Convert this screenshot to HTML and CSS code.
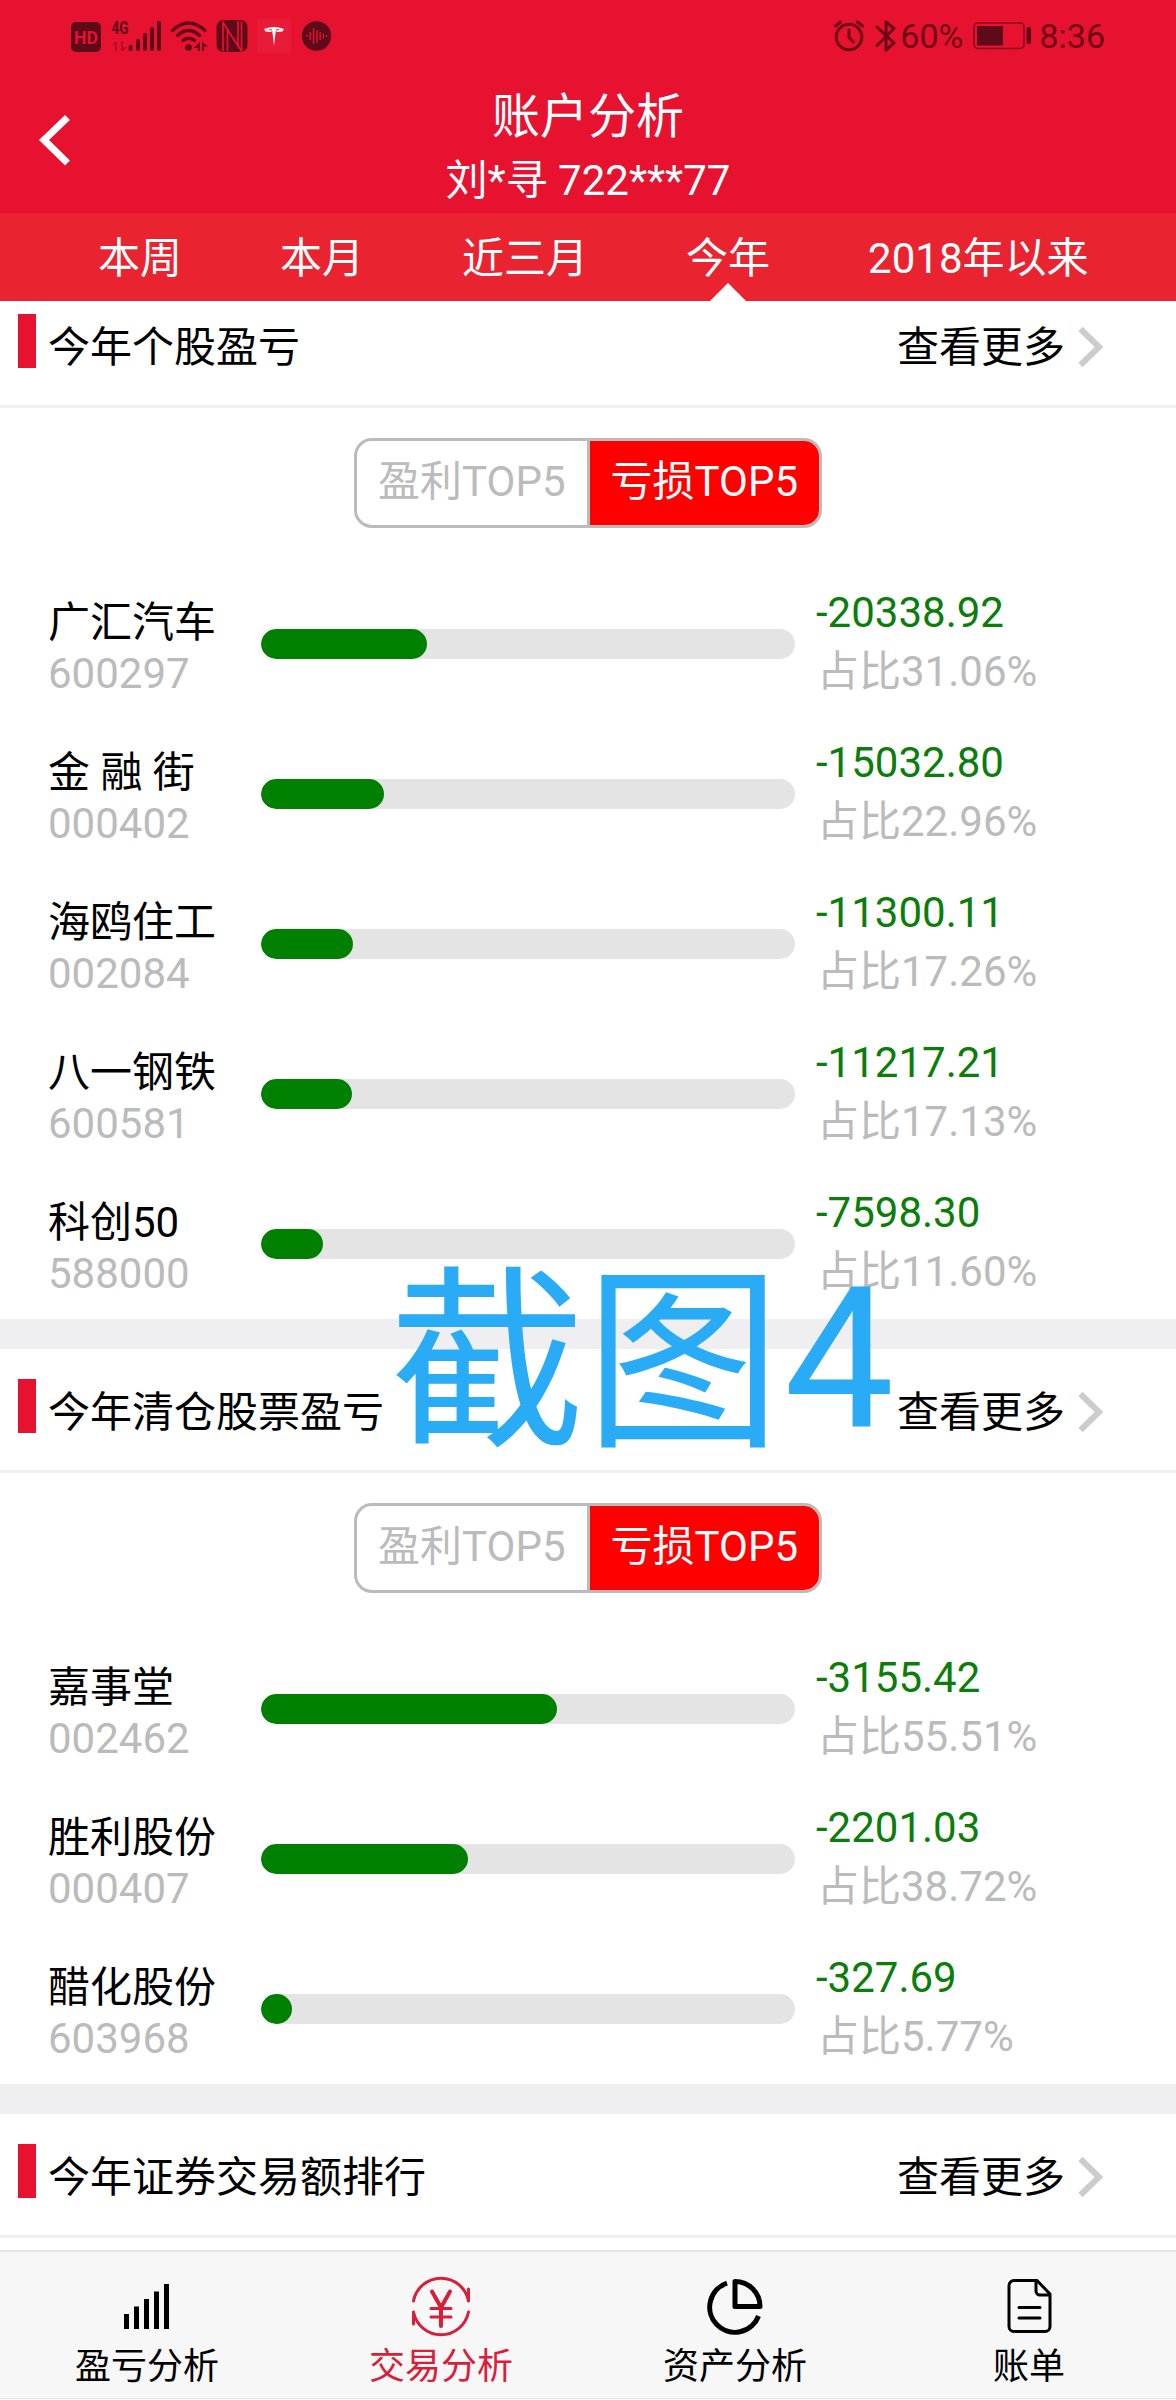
FILE: index.html
```html
<!DOCTYPE html>
<html lang="zh-CN">
<head>
<meta charset="utf-8">
<title>账户分析</title>
<link rel="stylesheet" href="styles.css">
</head>
<body>
<div class="app">
  <header class="header">
    <div class="status">
      <svg class="status-icons" width="270" height="40" viewBox="66 14 270 40">
        <g fill="#5e0a18">
          <rect x="71" y="22" width="30" height="30" rx="5"/>
          <text x="74" y="43.500" class="hd" textLength="24" lengthAdjust="spacingAndGlyphs">HD</text>
          <text x="111.500" y="34" class="net" textLength="17" lengthAdjust="spacingAndGlyphs">4G</text>
          <path opacity=".35" d="M117 41v10h-2v-6h-3zM121 41h2v6h4l-4 4h-2z"/>
          <rect x="128.500" y="45" width="4" height="6" rx="2"/><rect x="136" y="39" width="4" height="12" rx="2"/><rect x="143" y="33" width="4" height="18" rx="2"/><rect x="150" y="27" width="4" height="24" rx="2"/><rect x="157" y="21" width="4" height="30" rx="2"/>
          <circle cx="188.500" cy="47.500" r="3.300"/>
          <path d="M200 42v9h-2v-3h-4zM202 42l6 4.500h-4V51h-2z"/>
          <rect x="216.500" y="20" width="31" height="32" rx="7"/>
          <circle cx="316.500" cy="36" r="14.700"/>
        </g>
        <g fill="none" stroke="#5e0a18" stroke-width="3.200" stroke-linecap="round"><path d="M172.500 30.500q16-15 32.500 0M177.500 35.500q11-10 22 0M183 40.500q5.500-4.500 11.500 0"/></g>
        <path d="M223 51V22.500L238 46V21M241.500 21.500V51L227.500 30V51.500" fill="none" stroke="#e61230" stroke-width="1.700"/>
        <rect x="257" y="19" width="34" height="34" fill="#e81b38"/>
        <path fill="#fff" d="M264 29q10-4 20 0l-1.500 2.500-5.500.5-1.200-1.200L274 45.500l-1.800-14.700L271 32l-5.500-.5z"/>
        <path d="M269 29.800h3M276 29.800h3" stroke="#e81b38" stroke-width="1"/>
        <path d="M307 34.500v2M310.200 32v8M313.500 28v16M317 30v13M320.200 32v8M323.400 33.500v5M326.500 35v2" stroke="#e61230" stroke-width="1.400"/>
      </svg>
      <div class="status-right">
        <svg width="64" height="36" viewBox="832 18 64 36" fill="none" stroke="#6e0714" stroke-width="3" stroke-linecap="round" stroke-linejoin="round">
          <circle cx="849" cy="37" r="12.800"/><path d="M849 30v7.500l4.500 4.500M835.500 26l5-4M862.500 26l-5-4"/>
          <path d="M877 27l17 16-8 7V22l8 6.500L877 45.500"/>
        </svg>
        <span class="battery-text">60%</span>
        <svg class="battery" width="60" height="30" viewBox="972 22 60 30">
          <rect x="974" y="24" width="50" height="25.500" rx="4" fill="none" stroke="#8c0b1c" stroke-width="1.600"/><rect x="977" y="27" width="26" height="19.500" fill="#5e0a18"/><rect x="1026.500" y="28" width="4.500" height="17" rx="2" fill="#5e0a18"/>
        </svg>
        <span class="time">8:36</span>
      </div>
    </div>
    <div class="titlebar">
      <svg class="back" width="40" height="60" viewBox="36 110 40 60" fill="none" stroke="#fff" stroke-width="7"><path d="M67.500 117.500L44 140l23.500 23"/></svg>
      <h1 class="title">账户分析</h1>
      <div class="account">刘*寻 722***77</div>
    </div>
    <nav class="periods">
      <span>本周</span><span>本月</span><span>近三月</span><span class="current">今年</span><span>2018年以来</span>
    </nav>
  </header>

  <main class="content">
    <section class="panel">
      <div class="panel-head"><i class="mark"></i><h2>今年个股盈亏</h2><a class="more">查看更多<svg width="28" height="44" viewBox="0 0 28 44"><path d="M3.500 4L22 22 3.500 40"/></svg></a></div>
      <div class="toggle"><span>盈利TOP5</span><span class="on">亏损TOP5</span></div>
      <div class="row"><div class="stock"><b>广汇汽车</b><small>600297</small></div><div class="bar"><i style="width:31.06%"></i></div><div class="loss"><b>-20338.92</b><small>占比31.06%</small></div></div>
      <div class="row"><div class="stock"><b>金 融 街</b><small>000402</small></div><div class="bar"><i style="width:22.96%"></i></div><div class="loss"><b>-15032.80</b><small>占比22.96%</small></div></div>
      <div class="row"><div class="stock"><b>海鸥住工</b><small>002084</small></div><div class="bar"><i style="width:17.26%"></i></div><div class="loss"><b>-11300.11</b><small>占比17.26%</small></div></div>
      <div class="row"><div class="stock"><b>八一钢铁</b><small>600581</small></div><div class="bar"><i style="width:17.13%"></i></div><div class="loss"><b>-11217.21</b><small>占比17.13%</small></div></div>
      <div class="row"><div class="stock"><b>科创50</b><small>588000</small></div><div class="bar"><i style="width:11.60%"></i></div><div class="loss"><b>-7598.30</b><small>占比11.60%</small></div></div>
    </section>
    <section class="panel">
      <div class="panel-head"><i class="mark"></i><h2>今年清仓股票盈亏</h2><a class="more">查看更多<svg width="28" height="44" viewBox="0 0 28 44"><path d="M3.500 4L22 22 3.500 40"/></svg></a></div>
      <div class="toggle"><span>盈利TOP5</span><span class="on">亏损TOP5</span></div>
      <div class="row"><div class="stock"><b>嘉事堂</b><small>002462</small></div><div class="bar"><i style="width:55.51%"></i></div><div class="loss"><b>-3155.42</b><small>占比55.51%</small></div></div>
      <div class="row"><div class="stock"><b>胜利股份</b><small>000407</small></div><div class="bar"><i style="width:38.72%"></i></div><div class="loss"><b>-2201.03</b><small>占比38.72%</small></div></div>
      <div class="row"><div class="stock"><b>醋化股份</b><small>603968</small></div><div class="bar"><i style="width:5.77%"></i></div><div class="loss"><b>-327.69</b><small>占比5.77%</small></div></div>
    </section>
    <section class="panel last">
      <div class="panel-head"><i class="mark"></i><h2>今年证券交易额排行</h2><a class="more">查看更多<svg width="28" height="44" viewBox="0 0 28 44"><path d="M3.500 4L22 22 3.500 40"/></svg></a></div>
    </section>
  </main>

  <nav class="tabbar">
    <a class="tab"><svg width="64" height="64" viewBox="0 0 64 64" fill="currentColor"><path d="M9 40h5v15H9zM19 32.500h5V55h-5zM29 25h5v30h-5zM39 17.500h5V55h-5zM49 10h5v45h-5z"/></svg><span>盈亏分析</span></a>
    <a class="tab active"><svg width="64" height="64" viewBox="0 0 64 64" fill="none" stroke="currentColor" stroke-width="3" stroke-linecap="round" stroke-linejoin="round"><path d="M4.500 27A28 28 0 0 1 59.500 27V15M59.500 38A28 28 0 0 1 4.500 38V50"/><path stroke-width="4" d="M23 17.500l9 16 9-16M32 33v19"/><path d="M22 34.500h20M22 43h20"/></svg><span>交易分析</span></a>
    <a class="tab"><svg width="64" height="64" viewBox="0 0 64 64" fill="none" stroke="currentColor" stroke-width="5"><path stroke-linejoin="round" d="M32 7.500v25h25A25 25 0 0 0 32 7.500z"/><path d="M24 9.200A25.200 25.200 0 1 0 55.500 42"/></svg><span>资产分析</span></a>
    <a class="tab"><svg width="64" height="64" viewBox="0 0 64 64" fill="none" stroke="currentColor" stroke-width="3" stroke-linecap="round" stroke-linejoin="round"><path d="M40 6.500H17a5 5 0 0 0-5 5v41a5 5 0 0 0 5 5h31a5 5 0 0 0 5-5V20z"/><path d="M39 7v10a4 4 0 0 0 4 4h9M22 33.500h21M22 44h21"/></svg><span>账单</span></a>
  </nav>
  <div class="caption"><span class="caption-word">截图</span>4</div>
</div>
</body>
</html>
```

FILE: styles.css
```css
* { box-sizing: border-box; }
body { margin: 0; }
.app {
  position: relative;
  display: flex;
  flex-direction: column;
  width: 1176px;
  height: 2400px;
  overflow: hidden;
  background: #fff;
  color: #000;
  font: 400 42px/60px Roboto, "Noto Sans CJK SC", sans-serif;
}
b, small, h1, h2 { margin: 0; font-size: inherit; font-weight: inherit; }

.header { flex: none; height: 301px; background: #e61230; color: #fff; }
.status { display: flex; justify-content: space-between; height: 72px; padding: 14px 71px 0 66px; }
.status-right { display: flex; align-items: center; height: 44px; color: #6e0714; font-size: 34px; }
.status-right > svg:first-child { margin-right: 4px; }
.battery { margin: 0 7px 0 9px; }
.hd { font: 700 18px Roboto, sans-serif; fill: #e61230; }
.net { font: 700 19px Roboto, sans-serif; }
.titlebar {
  display: grid;
  grid-template: 90px 51px / 110px 1fr 110px;
  height: 141px;
  text-align: center;
}
.back { grid-row: 1 / 3; margin: 38px 0 0 36px; }
.title { grid-column: 2; font-size: 48px; line-height: 90px; }
.account { grid-column: 2; line-height: 37px; }
.periods { display: flex; gap: 98px; height: 88px; padding-left: 98px; background: #e92430; line-height: 92px; }
.current { display: flex; flex-direction: column; align-items: center; height: 88px; }
.current::after { content: ""; margin-top: -22px; border: 18px solid transparent; border-top: 0; border-bottom-color: #fff; }

.content { flex: none; height: 1949px; overflow: hidden; background: #efeff1; }
.panel { margin-bottom: 30px; background: #fff; overflow: hidden; }
.panel:first-child { margin-top: -17px; }
.panel.last { min-height: 136px; margin-bottom: 0; }
.panel-head { display: flex; height: 124px; padding: 30px 71px 0 18px; border-bottom: 3px solid #efeff0; }
.mark { width: 18px; height: 54px; margin-right: 12px; background: #e61230; }
.panel-head h2, .more { line-height: 67px; }
.more { display: flex; margin-left: auto; }
.more svg { margin: 11px 0 0 12px; fill: none; stroke: #ccc; stroke-width: 6; }
.toggle {
  display: flex;
  width: 468px;
  height: 90px;
  margin: 30px auto 41px;
  border: 3px solid #bbb;
  border-radius: 18px;
  overflow: hidden;
  color: #bbb;
  line-height: 82px;
  text-align: center;
}
.toggle span { flex: 1; }
.toggle .on { border-left: 3px solid #bbb; background: #f00; color: #fff; }
.row { display: grid; grid-template-columns: 213px 534px 1fr; align-items: center; height: 150px; padding-left: 48px; }
.row b, .row small { display: block; white-space: nowrap; }
.stock { height: 94px; line-height: 51px; }
.row small { color: #bbb; }
.bar { height: 30px; border-radius: 15px; background: #e4e4e4; overflow: hidden; }
.bar i { display: block; height: 30px; border-radius: 15px; background: #008000; }
.loss { height: 122px; padding-left: 21px; line-height: 59px; }
.loss b { color: #0b7d0b; }
.loss small { padding-left: 1px; }

.tabbar { display: flex; flex: none; height: 149px; border-top: 2px solid #e6e6e6; border-bottom: 1px solid #e6e6e6; background: #f7f7f7; }
.tab { display: flex; flex: 1; flex-direction: column; align-items: center; padding-top: 22px; font-size: 36px; line-height: 58px; }
.active { color: #d81e3a; }

.caption { position: absolute; left: 389px; top: 1240px; color: #29abf5; font-size: 196px; line-height: 240px; white-space: nowrap; }
.caption-word { position: relative; top: 4px; margin-right: 3px; }
```
